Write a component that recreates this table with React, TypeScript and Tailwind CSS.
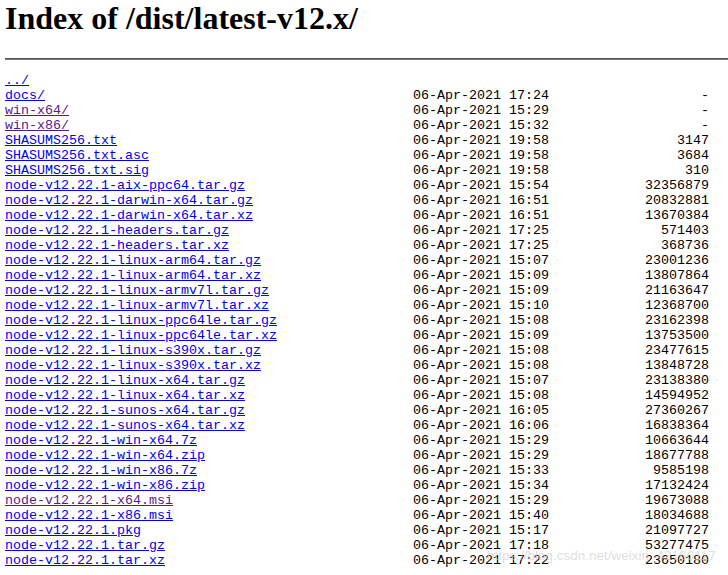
import React from "react";

// one row of the nginx autoindex listing
type Entry = { name: string; date: string; size: string; visited?: boolean };

const files: Entry[] = [
  { name: "docs/", date: "06-Apr-2021 17:24", size: "-" },
  { name: "win-x64/", date: "06-Apr-2021 15:29", size: "-", visited: true },
  { name: "win-x86/", date: "06-Apr-2021 15:32", size: "-", visited: true },
  { name: "SHASUMS256.txt", date: "06-Apr-2021 19:58", size: "3147" },
  { name: "SHASUMS256.txt.asc", date: "06-Apr-2021 19:58", size: "3684" },
  { name: "SHASUMS256.txt.sig", date: "06-Apr-2021 19:58", size: "310" },
  { name: "node-v12.22.1-aix-ppc64.tar.gz", date: "06-Apr-2021 15:54", size: "32356879" },
  { name: "node-v12.22.1-darwin-x64.tar.gz", date: "06-Apr-2021 16:51", size: "20832881" },
  { name: "node-v12.22.1-darwin-x64.tar.xz", date: "06-Apr-2021 16:51", size: "13670384" },
  { name: "node-v12.22.1-headers.tar.gz", date: "06-Apr-2021 17:25", size: "571403" },
  { name: "node-v12.22.1-headers.tar.xz", date: "06-Apr-2021 17:25", size: "368736" },
  { name: "node-v12.22.1-linux-arm64.tar.gz", date: "06-Apr-2021 15:07", size: "23001236" },
  { name: "node-v12.22.1-linux-arm64.tar.xz", date: "06-Apr-2021 15:09", size: "13807864" },
  { name: "node-v12.22.1-linux-armv7l.tar.gz", date: "06-Apr-2021 15:09", size: "21163647" },
  { name: "node-v12.22.1-linux-armv7l.tar.xz", date: "06-Apr-2021 15:10", size: "12368700" },
  { name: "node-v12.22.1-linux-ppc64le.tar.gz", date: "06-Apr-2021 15:08", size: "23162398" },
  { name: "node-v12.22.1-linux-ppc64le.tar.xz", date: "06-Apr-2021 15:09", size: "13753500" },
  { name: "node-v12.22.1-linux-s390x.tar.gz", date: "06-Apr-2021 15:08", size: "23477615" },
  { name: "node-v12.22.1-linux-s390x.tar.xz", date: "06-Apr-2021 15:08", size: "13848728" },
  { name: "node-v12.22.1-linux-x64.tar.gz", date: "06-Apr-2021 15:07", size: "23138380" },
  { name: "node-v12.22.1-linux-x64.tar.xz", date: "06-Apr-2021 15:08", size: "14594952" },
  { name: "node-v12.22.1-sunos-x64.tar.gz", date: "06-Apr-2021 16:05", size: "27360267" },
  { name: "node-v12.22.1-sunos-x64.tar.xz", date: "06-Apr-2021 16:06", size: "16838364" },
  { name: "node-v12.22.1-win-x64.7z", date: "06-Apr-2021 15:29", size: "10663644" },
  { name: "node-v12.22.1-win-x64.zip", date: "06-Apr-2021 15:29", size: "18677788" },
  { name: "node-v12.22.1-win-x86.7z", date: "06-Apr-2021 15:33", size: "9585198" },
  { name: "node-v12.22.1-win-x86.zip", date: "06-Apr-2021 15:34", size: "17132424" },
  { name: "node-v12.22.1-x64.msi", date: "06-Apr-2021 15:29", size: "19673088", visited: true },
  { name: "node-v12.22.1-x86.msi", date: "06-Apr-2021 15:40", size: "18034688" },
  { name: "node-v12.22.1.pkg", date: "06-Apr-2021 15:17", size: "21097727" },
  { name: "node-v12.22.1.tar.gz", date: "06-Apr-2021 17:18", size: "53277475" },
  { name: "node-v12.22.1.tar.xz", date: "06-Apr-2021 17:22", size: "23650180" },
];

export default function App() {
  return (
    <div className="relative min-h-[575px] bg-white pl-[5px] text-black overflow-hidden">
      <h1 className="font-['Liberation_Serif',serif] text-[32px] font-bold leading-[37px]">
        Index of /dist/latest-v12.x/
      </h1>
      <hr className="mt-[21px] h-[2px] border-0 border-t border-t-[#555] bg-[#7a7a7a]" />

      {/* listing */}
      <div className="mt-[13px] font-['Liberation_Mono',monospace] text-[13.333px] leading-[15px] whitespace-pre">
        <div>
          <a href="#" className="text-[#0000ee] underline">../</a>
        </div>
        {files.map((f) => (
          <div key={f.name} className="flex">
            <div className="w-[408px]">
              <a
                href="#"
                className={f.visited ? "text-[#551a8b] underline" : "text-[#0000ee] underline"}
              >
                {f.name}
              </a>
            </div>
            <div className="w-[136px]">{f.date}</div>
            <div className="w-[160px] text-right">{f.size}</div>
          </div>
        ))}
      </div>

      {/* csdn watermark */}
      <div className="absolute left-[487px] top-[548px] font-['Liberation_Sans',sans-serif] text-[13.5px] leading-[16px] text-[#cfcfcf]/70 pointer-events-none">
        https://blog.csdn.net/weixin_42160117
      </div>
    </div>
  );
}
